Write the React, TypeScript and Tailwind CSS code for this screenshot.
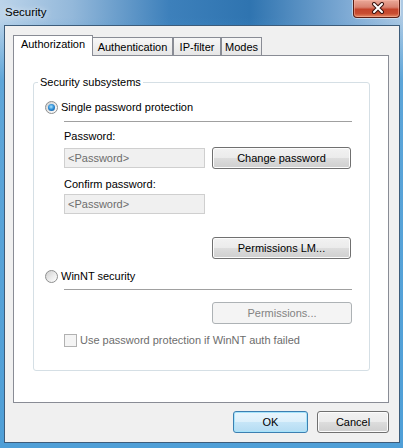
import React from "react"

const font = "font-['Liberation_Sans',Arial,sans-serif]"

function Button({
  label,
  width,
  disabled,
  isDefault,
}: {
  label: string
  width: string
  disabled?: boolean
  isDefault?: boolean
}) {
  let look =
    "border-[#707070] text-black bg-[linear-gradient(to_bottom,#f2f2f2_0%,#ebebeb_50%,#dddddd_50%,#cfcfcf_100%)] shadow-[inset_0_0_0_1px_#fcfcfc]"
  if (disabled) look = "border-[#adb2b5] text-[#838383] bg-[#f4f4f4]"
  if (isDefault)
    look =
      "border-[#3c7fb1] text-black bg-[linear-gradient(to_bottom,#eaf6fd_0%,#dcf0fb_50%,#c7e6f8_50%,#b4dcf3_100%)] shadow-[inset_0_0_0_1px_#a6e4fb]"
  return (
    <div className={`${width} h-[22px] shrink-0 rounded-[3px] border flex items-center justify-center text-[11px] leading-[14px] ${look}`}>
      {label}
    </div>
  )
}

function Radio({ checked }: { checked?: boolean }) {
  return (
    <span className="w-[13px] h-[13px] shrink-0 rounded-full border border-[#8e8f8f] bg-[linear-gradient(135deg,#cfcfcf,#ececec_55%,#ffffff)] flex items-center justify-center">
      {checked && (
        <span className="w-[7px] h-[7px] rounded-full bg-[radial-gradient(circle_at_45%_40%,#a8e4ff_0%,#2a8ad4_50%,#0c4786_100%)]" />
      )}
    </span>
  )
}

function Field() {
  return (
    <div className="w-[141px] h-[20px] border border-[#cfcfcf] bg-[#f0f0f0] text-[#6d6d6d] pl-[3px] flex items-center text-[11px] leading-[14px]">
      {"<Password>"}
    </div>
  )
}

export default function App() {
  return (
    <div
      className={`${font} w-[403px] h-[448px] flex flex-col text-black bg-[linear-gradient(to_bottom,rgba(78,158,214,0)_4%,rgba(78,158,214,0.85)_18%,#4f9fd7_100%),linear-gradient(to_right,#bcd4ea_0%,#93b8da_18%,#3d80bb_42%,#2f74b0_62%,#7eaad4_86%,#aecae4_100%)]`}
    >
      {/* title bar */}
      <div className="h-[25px] flex items-start shrink-0">
        <span className="ml-[5px] mt-[5px] text-[11.5px] leading-[14px] [text-shadow:0_0_6px_rgba(255,255,255,0.9)]">
          Security
        </span>
        <div className="ml-auto mr-[3px] w-[47px] h-[18px] rounded-b-[4px] border border-t-0 border-[#5b1d13] bg-[linear-gradient(to_bottom,#eaa999_0%,#d98270_42%,#c4442b_55%,#c94d31_80%,#e58c66_100%)] shadow-[0_0_0_1px_rgba(255,255,255,0.45),inset_0_0_0_1px_rgba(255,190,175,0.45)] flex items-start justify-center">
          <svg width="14" height="12" viewBox="0 0 14 12" className="mt-[2px] ml-[2px]">
            <path d="M3 2 L11 10 M11 2 L3 10" stroke="#3b1410" strokeWidth="4" strokeLinecap="round" />
            <path d="M3 2 L11 10 M11 2 L3 10" stroke="#ffffff" strokeWidth="2" strokeLinecap="round" />
          </svg>
        </div>
      </div>

      {/* client area */}
      <div className="ml-[4px] mr-[3px] h-[418px] border border-[#3d5c7a] bg-[#f0f0f0] flex flex-col text-[11px] leading-[14px]">
        {/* tabs */}
        <div className="mt-[9px] ml-[8px] h-[20px] flex items-end">
          <div className="relative z-10 -mb-px w-[80px] h-[21px] border border-b-0 border-[#898c95] bg-white flex justify-center pt-[1px]">
            Authorization
          </div>
          <div className="w-[80px] h-[18px] border border-l-0 border-b-0 border-[#898c95] bg-[linear-gradient(to_bottom,#f7f7f7,#e6e6e6)] flex justify-center pt-[2px]">
            Authentication
          </div>
          <div className="w-[48px] h-[18px] border border-b-0 border-[#898c95] bg-[linear-gradient(to_bottom,#f7f7f7,#e6e6e6)] flex justify-center pt-[2px]">
            IP-filter
          </div>
          <div className="w-[41px] h-[18px] border border-b-0 border-[#898c95] bg-[linear-gradient(to_bottom,#f7f7f7,#e6e6e6)] flex justify-center pt-[2px]">
            Modes
          </div>
        </div>

        {/* tab page */}
        <div className="ml-[8px] w-[376px] h-[348px] border border-[#898c95] bg-white">
          <div className="relative mt-[26px] ml-[19px] w-[337px] h-[289px] rounded-[3px] border border-[#d5dfe5] pl-[11px] flex flex-col">
            <span className="absolute -top-[8px] left-[4px] px-[2px] bg-white">Security subsystems</span>

            <div className="mt-[17px] h-[14px] flex items-center gap-[3px]">
              <Radio checked />
              <span>Single password protection</span>
            </div>

            <div className="ml-[19px] flex flex-col">
              <div className="mt-[7px] w-[288px] h-px bg-[#a0a0a0]" />
              <div className="mt-[7px]">Password:</div>
              <div className="mt-[4px] flex items-start gap-[7px]">
                <div className="mt-[1px]">
                  <Field />
                </div>
                <Button label="Change password" width="w-[139px]" />
              </div>
              <div className="mt-[8px]">Confirm password:</div>
              <div className="mt-[3px]">
                <Field />
              </div>
              <div className="mt-[23px] ml-[148px]">
                <Button label="Permissions LM..." width="w-[139px]" />
              </div>
            </div>

            <div className="mt-[10px] h-[14px] flex items-center gap-[3px]">
              <Radio />
              <span>WinNT security</span>
            </div>

            <div className="ml-[19px] flex flex-col">
              <div className="mt-[6px] w-[288px] h-px bg-[#a0a0a0]" />
              <div className="mt-[12px] ml-[148px]">
                <Button label="Permissions..." width="w-[140px]" disabled />
              </div>
              <div className="mt-[9px] h-[14px] flex items-center gap-[3px] text-[#6d6d6d]">
                <span className="w-[13px] h-[13px] border border-[#b1b1b1] bg-[#f4f4f4]" />
                <span>Use password protection if WinNT auth failed</span>
              </div>
            </div>
          </div>
        </div>

        {/* dialog buttons */}
        <div className="mt-[8px] pr-[10px] flex justify-end gap-[9px]">
          <Button label="OK" width="w-[75px]" isDefault />
          <Button label="Cancel" width="w-[72px]" />
        </div>
      </div>
    </div>
  )
}
